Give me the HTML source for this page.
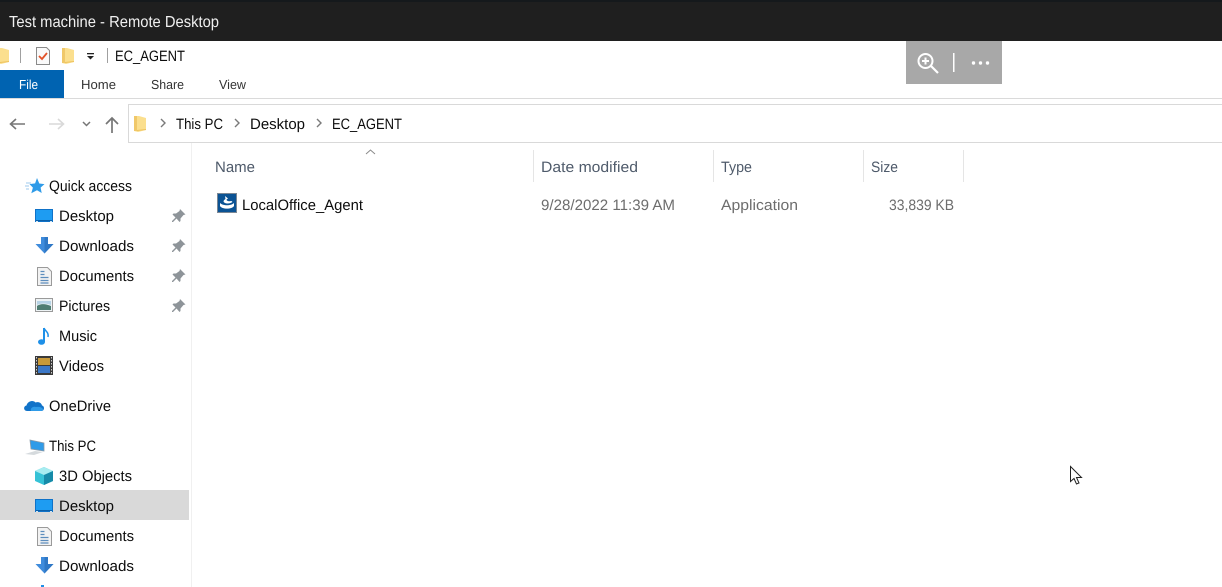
<!DOCTYPE html>
<html><head><meta charset="utf-8"><title>Test machine - Remote Desktop</title>
<style>html,body{margin:0;padding:0;background:#fff;overflow:hidden}svg{display:block}text{font-family:"Liberation Sans",sans-serif;font-size:15px;fill:#0c0c0c;text-rendering:geometricPrecision}.g{fill:#6d6d6d}.h{fill:#4f5b6b}.r{font-size:13px;fill:#333}</style></head>
<body>
<svg width="1222" height="587" viewBox="0 0 1222 587" xmlns="http://www.w3.org/2000/svg">
<defs>
<g id="folder"><path d="M0 1h5l7 2v12l-8 2-4-1z" fill="#fbdf8e"/><path d="M0 1h3v15l-3 0z" fill="#f0c869"/><path d="M3 16l9-1v-1l-9 1z" fill="#eec25e"/></g>
<g id="desk"><rect x="0" y="0" width="18" height="13" fill="#0f72c8"/><rect x="1" y="1" width="16" height="10" fill="#1e9cf2"/><path d="M1 11h16v1H1z" fill="#0b5fa8"/><rect x="1" y="12" width="2" height="1" fill="#cfe6f7"/><rect x="15" y="12" width="2" height="1" fill="#cfe6f7"/></g>
<g id="down"><path d="M5 0h7v7h5.500l-9 9.500L-.5 7H5z" fill="#3f8cdc"/><path d="M8.500 0H12v7h5.500l-9 9.500z" fill="#2f78c6"/></g>
<g id="doc"><path d="M0 0h10l4 4v14H0z" fill="#f2f2f2" stroke="#9a9a9a"/><path d="M3 4h4M3 7h4M3 10h8M3 13h8M3 15.500h8" stroke="#5c8dbd" stroke-width="1.200"/></g>
<g id="pin"><path d="M8 0l5.500 5.500-2 .5-3 3.500 0 2.500-1 1L4.500 9.500 1 13H0v-1l3.500-3.500L0.500 5.500l1-1 2.500 0L7.500 2z" fill="#8e9499"/></g>
</defs>
<rect width="1222" height="587" fill="#fff"/>
<rect width="1222" height="41" fill="#1f1f1f"/>
<rect width="1222" height="2" fill="#15191c"/>
<text x="9" y="27" style="font-size:16px;fill:#f0f0f0" textLength="210" lengthAdjust="spacingAndGlyphs">Test machine - Remote Desktop</text>

<!-- qat -->
<g transform="translate(-3,47)"><use href="#folder"/></g>
<rect x="20" y="48" width="1" height="15" fill="#a0a0a0"/>
<path d="M36.500 47.500h10l3 3v14h-13z" fill="#fafafa" stroke="#8a8a8a"/>
<path d="M39 56l3 3 5-6" fill="none" stroke="#e2532a" stroke-width="1.800"/>
<g transform="translate(62,47)"><use href="#folder"/></g>
<rect x="87" y="53" width="7" height="1.300" fill="#222"/><path d="M87 56h7l-3.500 3.500z" fill="#222"/>
<rect x="107" y="48" width="1" height="15" fill="#a0a0a0"/>
<text x="115" y="61" textLength="70" lengthAdjust="spacingAndGlyphs">EC_AGENT</text>

<!-- ribbon -->
<rect x="0" y="70" width="64" height="28" fill="#0063b1"/>
<text x="19" y="89" class="r" style="fill:#fff" textLength="19" lengthAdjust="spacingAndGlyphs">File</text>
<text x="81" y="89" class="r" textLength="35" lengthAdjust="spacingAndGlyphs">Home</text>
<text x="151" y="89" class="r" textLength="33" lengthAdjust="spacingAndGlyphs">Share</text>
<text x="219" y="89" class="r" textLength="27" lengthAdjust="spacingAndGlyphs">View</text>
<rect x="0" y="98" width="1222" height="1" fill="#dadada"/>

<!-- nav -->
<path d="M25 124H11M16 119l-5.500 5 5.500 5" fill="none" stroke="#767676" stroke-width="1.600"/>
<path d="M49 124h14M58 119l5.500 5-5.500 5" fill="none" stroke="#d9d9d9" stroke-width="1.600"/>
<path d="M83 122l3.500 3.500 3.500-3.500" fill="none" stroke="#767676" stroke-width="1.500"/>
<path d="M112 133V118M106 124l6-6 6 6" fill="none" stroke="#767676" stroke-width="1.700"/>
<rect x="128.500" y="104.500" width="1100" height="38" fill="#fff" stroke="#d9d9d9"/>
<g transform="translate(134,115)"><use href="#folder"/></g>
<path d="M161 119l4 4-4 4M235 119l4 4-4 4M317 119l4 4-4 4" fill="none" stroke="#7a7a7a" stroke-width="1.400"/>
<text x="176" y="129" textLength="47" lengthAdjust="spacingAndGlyphs">This PC</text>
<text x="250" y="129" textLength="55" lengthAdjust="spacingAndGlyphs">Desktop</text>
<text x="332" y="129" textLength="70" lengthAdjust="spacingAndGlyphs">EC_AGENT</text>

<!-- headers -->
<path d="M366 154l4.500-4 4.500 4" fill="none" stroke="#8a8a8a"/>
<rect x="533" y="150" width="1" height="32" fill="#e5e5e5"/>
<rect x="713" y="150" width="1" height="32" fill="#e5e5e5"/>
<rect x="863" y="150" width="1" height="32" fill="#e5e5e5"/>
<rect x="963" y="150" width="1" height="32" fill="#e5e5e5"/>
<text x="215" y="172" class="h" textLength="40" lengthAdjust="spacingAndGlyphs">Name</text>
<text x="541" y="172" class="h" textLength="97" lengthAdjust="spacingAndGlyphs">Date modified</text>
<text x="721" y="172" class="h" textLength="31" lengthAdjust="spacingAndGlyphs">Type</text>
<text x="871" y="172" class="h" textLength="27" lengthAdjust="spacingAndGlyphs">Size</text>

<!-- row -->
<rect x="217.500" y="193.500" width="19" height="19" fill="#0b5394" stroke="#7b8794"/>
<path d="M220 203c3 3 11 3 14 0v3c-2 3.500-12 3.500-14 0z" fill="#fff"/>
<path d="M225 196l3 2.500-1.500 1c0 1.500 2 2 5 1.500l1 1c-3 2-8 2-9-.5 0-1 1-2 2-2.500z" fill="#fff"/>
<text x="242" y="210" textLength="121" lengthAdjust="spacingAndGlyphs">LocalOffice_Agent</text>
<text x="541" y="210" class="g" textLength="134" lengthAdjust="spacingAndGlyphs">9/28/2022 11:39 AM</text>
<text x="721" y="210" class="g" textLength="77" lengthAdjust="spacingAndGlyphs">Application</text>
<text x="889" y="210" class="g" textLength="65" lengthAdjust="spacingAndGlyphs">33,839 KB</text>

<!-- sidebar -->
<rect x="191" y="143" width="1" height="444" fill="#f0f0f0"/>
<rect x="0" y="490" width="189" height="30" fill="#d9d9d9"/>
<path d="M37 178l2.300 5.500 5.200.6-3.900 3.500 1.100 5.400-4.700-2.700-5.700 3 1.600-5.700-3.400-3.500 5.600-.7z" fill="#2f9be8"/>
<path d="M26 183h5M25 186h4M26 189h3" stroke="#9dc9ee"/>
<text x="49" y="191" textLength="83" lengthAdjust="spacingAndGlyphs">Quick access</text>

<g transform="translate(35,209)"><use href="#desk"/></g>
<text x="59" y="221" textLength="55" lengthAdjust="spacingAndGlyphs">Desktop</text>
<g transform="translate(172,209)"><use href="#pin"/></g>
<g transform="translate(36,237)"><use href="#down"/></g>
<text x="59" y="251" textLength="75" lengthAdjust="spacingAndGlyphs">Downloads</text>
<g transform="translate(172,239)"><use href="#pin"/></g>
<g transform="translate(37.500,267.500)"><use href="#doc"/></g>
<text x="59" y="281" textLength="75" lengthAdjust="spacingAndGlyphs">Documents</text>
<g transform="translate(172,269)"><use href="#pin"/></g>
<rect x="35.500" y="298.500" width="17" height="13" fill="#eef3f5" stroke="#9a9a9a"/>
<path d="M37 306c4-3 9-2 14 0v4H37z" fill="#4f7d72"/><path d="M37 301h14v4c-5-2-10-2-14 0z" fill="#b7d3e6"/>
<text x="59" y="311" textLength="51" lengthAdjust="spacingAndGlyphs">Pictures</text>
<g transform="translate(172,299)"><use href="#pin"/></g>
<path d="M44 328v14" stroke="#1e90e8" stroke-width="2"/><ellipse cx="41.500" cy="342" rx="3.500" ry="2.800" fill="#1e90e8"/><path d="M44 328c1 3 5 4 4 9" fill="none" stroke="#1e90e8" stroke-width="1.500"/>
<text x="59" y="341" textLength="38" lengthAdjust="spacingAndGlyphs">Music</text>
<rect x="35" y="356" width="18" height="19" fill="#3a3a3a"/>
<rect x="38" y="358" width="12" height="7" fill="#c99a3a"/><rect x="38" y="366" width="12" height="7" fill="#3c78c8"/>
<path d="M36.500 357v17M51.500 357v17" stroke="#ccc" stroke-dasharray="1.500 1.500"/>
<text x="59" y="371" textLength="45" lengthAdjust="spacingAndGlyphs">Videos</text>

<path d="M27 411c-3.500 0-4-5-.5-5.500 1-4 6-6 9-3 3-1 6 .5 6.500 3 3 .5 2.500 5.500-.5 5.500z" fill="#1173c9"/>
<path d="M31 411c-1-3 2-5 5-4 3-.5 7 .5 7 2.500 0 1-1 1.500-2 1.500z" fill="#2f9be8"/>
<text x="49" y="411" textLength="62" lengthAdjust="spacingAndGlyphs">OneDrive</text>

<path d="M30 440l14 3v8l-13-2z" fill="#2f9be8" stroke="#8a9aa8" stroke-width=".8"/>
<path d="M25 454l10-3 8 1-9 3z" fill="#d5dadd"/>
<text x="49" y="451" textLength="47" lengthAdjust="spacingAndGlyphs">This PC</text>

<path d="M44 467l9 4v10l-9 4-9-4v-10z" fill="#35c2d6"/><path d="M44 467l9 4-9 4-9-4z" fill="#a7ecf0"/><path d="M44 475l9-4v10l-9 4z" fill="#168aa8"/>
<text x="59" y="481" textLength="73" lengthAdjust="spacingAndGlyphs">3D Objects</text>

<g transform="translate(35,499)"><use href="#desk"/></g>
<text x="59" y="511" textLength="55" lengthAdjust="spacingAndGlyphs">Desktop</text>
<g transform="translate(37.500,527.500)"><use href="#doc"/></g>
<text x="59" y="541" textLength="75" lengthAdjust="spacingAndGlyphs">Documents</text>
<g transform="translate(36,557)"><use href="#down"/></g>
<text x="59" y="571" textLength="75" lengthAdjust="spacingAndGlyphs">Downloads</text>
<rect x="41" y="585" width="3" height="2" fill="#1e90e8"/>

<!-- overlay toolbar -->
<rect x="906" y="41" width="96" height="43" fill="#a8a8a8"/>
<circle cx="925.500" cy="61" r="7" fill="none" stroke="#fff" stroke-width="2"/>
<path d="M922 61h7M925.500 57.500v7" stroke="#fff" stroke-width="2"/>
<path d="M931 66l7 7" stroke="#fff" stroke-width="2.200"/>
<rect x="953" y="53" width="1.500" height="19" fill="#fff"/>
<circle cx="973.500" cy="63" r="1.700" fill="#fff"/><circle cx="980.500" cy="63" r="1.700" fill="#fff"/><circle cx="987.500" cy="63" r="1.700" fill="#fff"/>

<!-- cursor -->
<path d="M1070.500 466.500v15l3.500-3 2.500 5.500 2.500-1-2.500-5.500h5z" fill="#fff" stroke="#222"/>
</svg>
</body></html>
